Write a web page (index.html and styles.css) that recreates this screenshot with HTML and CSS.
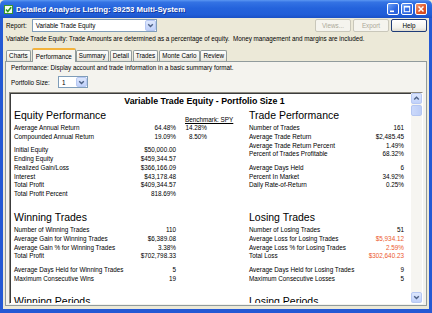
FILE: index.html
```html
<!DOCTYPE html>
<html lang="en">
<head>
    <meta charset="UTF-8">
    <link rel="stylesheet" href="styles.css">
    <title>Detailed Analysis Listing</title>
</head>
<body>
    <div class="window">
        <div class="titlebar">
            <svg class="appicon" width="9" height="9" viewBox="0 0 9 9">
                <rect x="0.5" y="0.5" width="8" height="8" fill="#f4fbef" stroke="#3d9a2c"/>
                <polyline points="2,4.5 3.8,6.5 7.2,2.2" fill="none" stroke="#2f9a1e" stroke-width="1.6"/>
            </svg>
            <span class="title">Detailed Analysis Listing: 39253 Multi-System</span>
            <div class="capbtns">
                <div class="cbtn"><svg width="10" height="10" viewBox="0 0 10 10"><rect x="2" y="6.5" width="4" height="1.6" fill="#fff"/></svg></div>
                <div class="cbtn"><svg width="10" height="10" viewBox="0 0 10 10"><rect x="2.3" y="2.3" width="5.4" height="5.4" fill="none" stroke="#fff" stroke-width="1"/><rect x="2" y="2" width="6" height="1.5" fill="#fff"/></svg></div>
                <div class="cbtn close"><svg width="10" height="10" viewBox="0 0 10 10"><path d="M2.5 2.5 L7.5 7.5 M7.5 2.5 L2.5 7.5" stroke="#fff" stroke-width="1.5"/></svg></div>
            </div>
        </div>
        <div class="frame">
            <div class="toolbar">
                <span class="lbl">Report:</span>
                <div class="combo wide"><span class="combo-text">Variable Trade Equity</span><div class="drop"><svg width="9" height="9" viewBox="0 0 9 9"><path d="M2.2 3.3 L4.5 5.6 L6.8 3.3" fill="none" stroke="#4d6185" stroke-width="1.4"/></svg></div></div>
                <div class="spacer"></div>
                <div class="btn off">Views...</div>
                <div class="btn off">Export</div>
                <div class="btn">Help</div>
            </div>
            <p class="desc">Variable Trade Equity: Trade Amounts are determined as a percentage of equity.&nbsp; Money management and margins are included.</p>
            <div class="tabs">
                <div class="tab">Charts</div>
                <div class="tab on">Performance</div>
                <div class="tab">Summary</div>
                <div class="tab">Detail</div>
                <div class="tab">Trades</div>
                <div class="tab">Monte Carlo</div>
                <div class="tab">Review</div>
            </div>
            <div class="tabpage">
                <p class="desc inner">Performance: Display account and trade information in a basic summary format.</p>
                <div class="psize">
                    <span class="lbl">Portfolio Size:</span>
                    <div class="combo small"><span class="combo-text">1</span><div class="drop"><svg width="9" height="9" viewBox="0 0 9 9"><path d="M2.2 3.3 L4.5 5.6 L6.8 3.3" fill="none" stroke="#4d6185" stroke-width="1.4"/></svg></div></div>
                </div>
                <div class="report">
                    <div class="report-body">
                        <div class="rep-title">Variable Trade Equity - Portfolio Size 1</div>

                        <div class="section">
                            <div class="col left">
                                <div class="head">
                                    <h2>Equity Performance</h2>
                                    <span class="bench">Benchmark: SPY</span>
                                </div>
                                <div class="rows">
                                    <div class="group">
                                        <div class="row b"><span>Average Annual Return</span><span>64.48%</span><span>14.28%</span></div>
                                        <div class="row b"><span>Compounded Annual Return</span><span>19.09%</span><span>8.50%</span></div>
                                    </div>
                                    <div class="group">
                                        <div class="row"><span>Initial Equity</span><span>$50,000.00</span></div>
                                        <div class="row"><span>Ending Equity</span><span>$459,344.57</span></div>
                                        <div class="row"><span>Realized Gain/Loss</span><span>$366,166.09</span></div>
                                        <div class="row"><span>Interest</span><span>$43,178.48</span></div>
                                        <div class="row"><span>Total Profit</span><span>$409,344.57</span></div>
                                        <div class="row"><span>Total Profit Percent</span><span>818.69%</span></div>
                                    </div>
                                </div>
                            </div>
                            <div class="col right">
                                <div class="head"><h2>Trade Performance</h2></div>
                                <div class="rows">
                                    <div class="group">
                                        <div class="row"><span>Number of Trades</span><span>161</span></div>
                                        <div class="row"><span>Average Trade Return</span><span>$2,485.45</span></div>
                                        <div class="row"><span>Average Trade Return Percent</span><span>1.49%</span></div>
                                        <div class="row"><span>Percent of Trades Profitable</span><span>68.32%</span></div>
                                    </div>
                                    <div class="group">
                                        <div class="row"><span>Average Days Held</span><span>6</span></div>
                                        <div class="row"><span>Percent In Market</span><span>34.92%</span></div>
                                        <div class="row"><span>Daily Rate-of-Return</span><span>0.25%</span></div>
                                    </div>
                                </div>
                            </div>
                        </div>

                        <div class="section">
                            <div class="col left">
                                <div class="head"><h2>Winning Trades</h2></div>
                                <div class="rows">
                                    <div class="group">
                                        <div class="row"><span>Number of Winning Trades</span><span>110</span></div>
                                        <div class="row"><span>Average Gain for Winning Trades</span><span>$6,389.08</span></div>
                                        <div class="row"><span>Average Gain % for Winning Trades</span><span>3.38%</span></div>
                                        <div class="row"><span>Total Profit</span><span>$702,798.33</span></div>
                                    </div>
                                    <div class="group">
                                        <div class="row"><span>Average Days Held for Winning Trades</span><span>5</span></div>
                                        <div class="row"><span>Maximum Consecutive Wins</span><span>19</span></div>
                                    </div>
                                </div>
                            </div>
                            <div class="col right">
                                <div class="head"><h2>Losing Trades</h2></div>
                                <div class="rows">
                                    <div class="group">
                                        <div class="row"><span>Number of Losing Trades</span><span>51</span></div>
                                        <div class="row"><span>Average Loss for Losing Trades</span><span class="neg">$5,934.12</span></div>
                                        <div class="row"><span>Average Loss % for Losing Trades</span><span class="neg">2.59%</span></div>
                                        <div class="row"><span>Total Loss</span><span class="neg">$302,640.23</span></div>
                                    </div>
                                    <div class="group">
                                        <div class="row"><span>Average Days Held for Losing Trades</span><span>9</span></div>
                                        <div class="row"><span>Maximum Consecutive Losses</span><span>5</span></div>
                                    </div>
                                </div>
                            </div>
                        </div>

                        <div class="section">
                            <div class="col left"><div class="head"><h2>Winning Periods</h2></div></div>
                            <div class="col right"><div class="head"><h2>Losing Periods</h2></div></div>
                        </div>
                    </div>
                    <div class="scrollbar">
                        <div class="sbtn"><svg width="9" height="9" viewBox="0 0 9 9"><path d="M2.2 5.6 L4.5 3.3 L6.8 5.6" fill="none" stroke="#4d6185" stroke-width="1.4"/></svg></div>
                        <div class="thumb"></div>
                        <div class="track"></div>
                        <div class="sbtn"><svg width="9" height="9" viewBox="0 0 9 9"><path d="M2.2 3.3 L4.5 5.6 L6.8 3.3" fill="none" stroke="#4d6185" stroke-width="1.4"/></svg></div>
                    </div>
                </div>
            </div>
        </div>
    </div>
</body>
</html>
```

FILE: styles.css
```css
* {
    box-sizing: border-box;
}
body {
    margin: 0;
    background-color: #ece9d8;
    color: #000;
    font-family: "Liberation Sans", Arial, sans-serif;
    font-size: 6.3px;
}
.window {
    width: 432px;
    height: 313px;
    display: flex;
    flex-direction: column;
    overflow: hidden;
}

/* title bar */
.titlebar {
    flex-shrink: 0;
    height: 18px;
    display: flex;
    align-items: center;
    padding: 0 5px 0 4px;
    background: linear-gradient(180deg, #5b97f2 0%, #3473e4 12%, #2463dc 45%, #215ed8 80%, #1a51c6 100%);
    border-radius: 5px 5px 0 0;
}
.appicon {
    margin-right: 3px;
}
.title {
    flex: 1;
    color: #fff;
    font-weight: bold;
    font-size: 7.8px;
    text-shadow: 1px 1px 0 #16399c;
}
.capbtns {
    display: flex;
    gap: 1.5px;
}
.cbtn {
    width: 12px;
    height: 12px;
    display: flex;
    align-items: center;
    justify-content: center;
    border: 1px solid #fff;
    border-radius: 2px;
    background: linear-gradient(135deg, #6fa2f7, #2c66e2 60%, #2a5fd8);
}
.cbtn.close {
    margin-left: 1px;
    background: linear-gradient(135deg, #f39a72, #e0582c 55%, #cf4418);
}

/* window body */
.frame {
    flex: 1;
    min-height: 0;
    display: flex;
    flex-direction: column;
    background-color: #ece9d8;
    border: solid #2459d4;
    border-width: 0 3px 4px 3px;
    padding: 1px 2px 3px 2px;
}
.toolbar {
    flex-shrink: 0;
    height: 13px;
    display: flex;
    align-items: center;
    padding-left: 1px;
}
.lbl {
    margin-right: 5px;
}
.spacer {
    flex: 1;
}
.combo {
    height: 13px;
    display: flex;
    align-items: center;
    background: #fff;
    border: 1px solid #7f9db9;
}
.combo.wide {
    width: 125px;
}
.combo.small {
    width: 30px;
    height: 12px;
}
.combo-text {
    flex: 1;
    padding-left: 3px;
}
.drop, .sbtn {
    flex-shrink: 0;
    width: 11px;
    height: 11px;
    display: flex;
    align-items: center;
    justify-content: center;
    background: linear-gradient(180deg, #dde7fd, #c0d1fa);
    border: 1px solid #b7c8f3;
    border-radius: 2px;
}
.combo.small .drop {
    height: 10px;
}
.btn {
    width: 36px;
    height: 13px;
    margin-left: 2px;
    display: flex;
    align-items: center;
    justify-content: center;
    border: 1px solid #1f3c78;
    border-radius: 2px;
    background: linear-gradient(180deg, #ffffff, #f3f2ec 70%, #dedbcf);
}
.btn.off {
    color: #aca899;
    border-color: #c9c7ba;
    background: #f5f4ee;
}
.desc {
    flex-shrink: 0;
    margin: 3px 0 0 0;
    padding-left: 1px;
    line-height: 8px;
    white-space: nowrap;
}

/* tabs */
.tabs {
    flex-shrink: 0;
    height: 11px;
    margin-top: 7px;
    display: flex;
    align-items: flex-end;
    padding-left: 1px;
}
.tab {
    height: 11px;
    line-height: 10px;
    padding: 0 2.1px;
    margin-right: 0.8px;
    border: 1px solid #919b9c;
    border-bottom: none;
    border-radius: 2px 2px 0 0;
    background: linear-gradient(180deg, #ffffff, #eeede6 80%, #e2e0d6);
}
.tab.on {
    position: relative;
    z-index: 1;
    height: 14px;
    margin: 0 0 -1px 0.5px;
    padding: 0 2.8px;
    line-height: 13px;
    background: #f6f5f0;
    border-top: 2px solid #f3b33c;
}
.tabpage {
    flex: 1;
    min-height: 0;
    display: flex;
    flex-direction: column;
    border: 1px solid #919b9c;
    background-color: #f4f3ee;
    padding: 2px 3px 1px 3px;
}
.desc.inner {
    margin: 0;
    padding-left: 2px;
}
.psize {
    flex-shrink: 0;
    height: 12px;
    margin-top: 4px;
    display: flex;
    align-items: center;
    padding-left: 2px;
}
.psize .lbl {
    width: 47px;
    margin: 0;
}

/* report area */
.report {
    flex: 1;
    min-height: 0;
    margin-top: 4px;
    display: flex;
    background: #fff;
    border: 1px solid;
    border-color: #8d8a80 #ffffff #ffffff #8d8a80;
    box-shadow: inset 1px 1px 0 #3c3c3c;
    overflow: hidden;
}
.report-body {
    flex: 1;
    padding: 3px 0 0 4px;
    overflow: hidden;
    font-size: 6.35px;
}
.rep-title {
    font-size: 8.8px;
    font-weight: bold;
    line-height: 10px;
    text-align: center;
    padding-right: 16px;
}
.section {
    display: grid;
    grid-template-columns: 221px 155px;
    column-gap: 14px;
    margin-top: 12px;
}
.rep-title + .section {
    margin-top: 3px;
}
.head {
    height: 12px;
    display: flex;
    align-items: flex-start;
}
.head h2 {
    margin: 0;
    width: 171px;
    font-size: 10.5px;
    font-weight: normal;
    line-height: 12px;
    white-space: nowrap;
}
.bench {
    margin-top: 6.6px;
    line-height: 8.8px;
    text-decoration: underline;
    white-space: nowrap;
}
.rows {
    margin-top: 3.1px;
}
.group + .group {
    margin-top: 4.5px;
}
.row {
    display: grid;
    grid-template-columns: 1fr auto;
    width: 162px;
    height: 8.8px;
    line-height: 8.8px;
    white-space: nowrap;
}
.right .row {
    width: 155px;
}
.row.b {
    grid-template-columns: 1fr auto 31px;
    width: 193px;
}
.row.b span:last-child {
    text-align: right;
}
.neg {
    color: #ec5a2e;
}

/* scrollbar */
.scrollbar {
    width: 11px;
    display: flex;
    flex-direction: column;
    background: #f6f5f1;
}
.thumb {
    height: 11px;
    margin-top: 1px;
    background: linear-gradient(90deg, #cbd9fb, #bccdf6);
    border: 1px solid #b4c6f2;
    border-radius: 2px;
}
.track {
    flex: 1;
}
```
